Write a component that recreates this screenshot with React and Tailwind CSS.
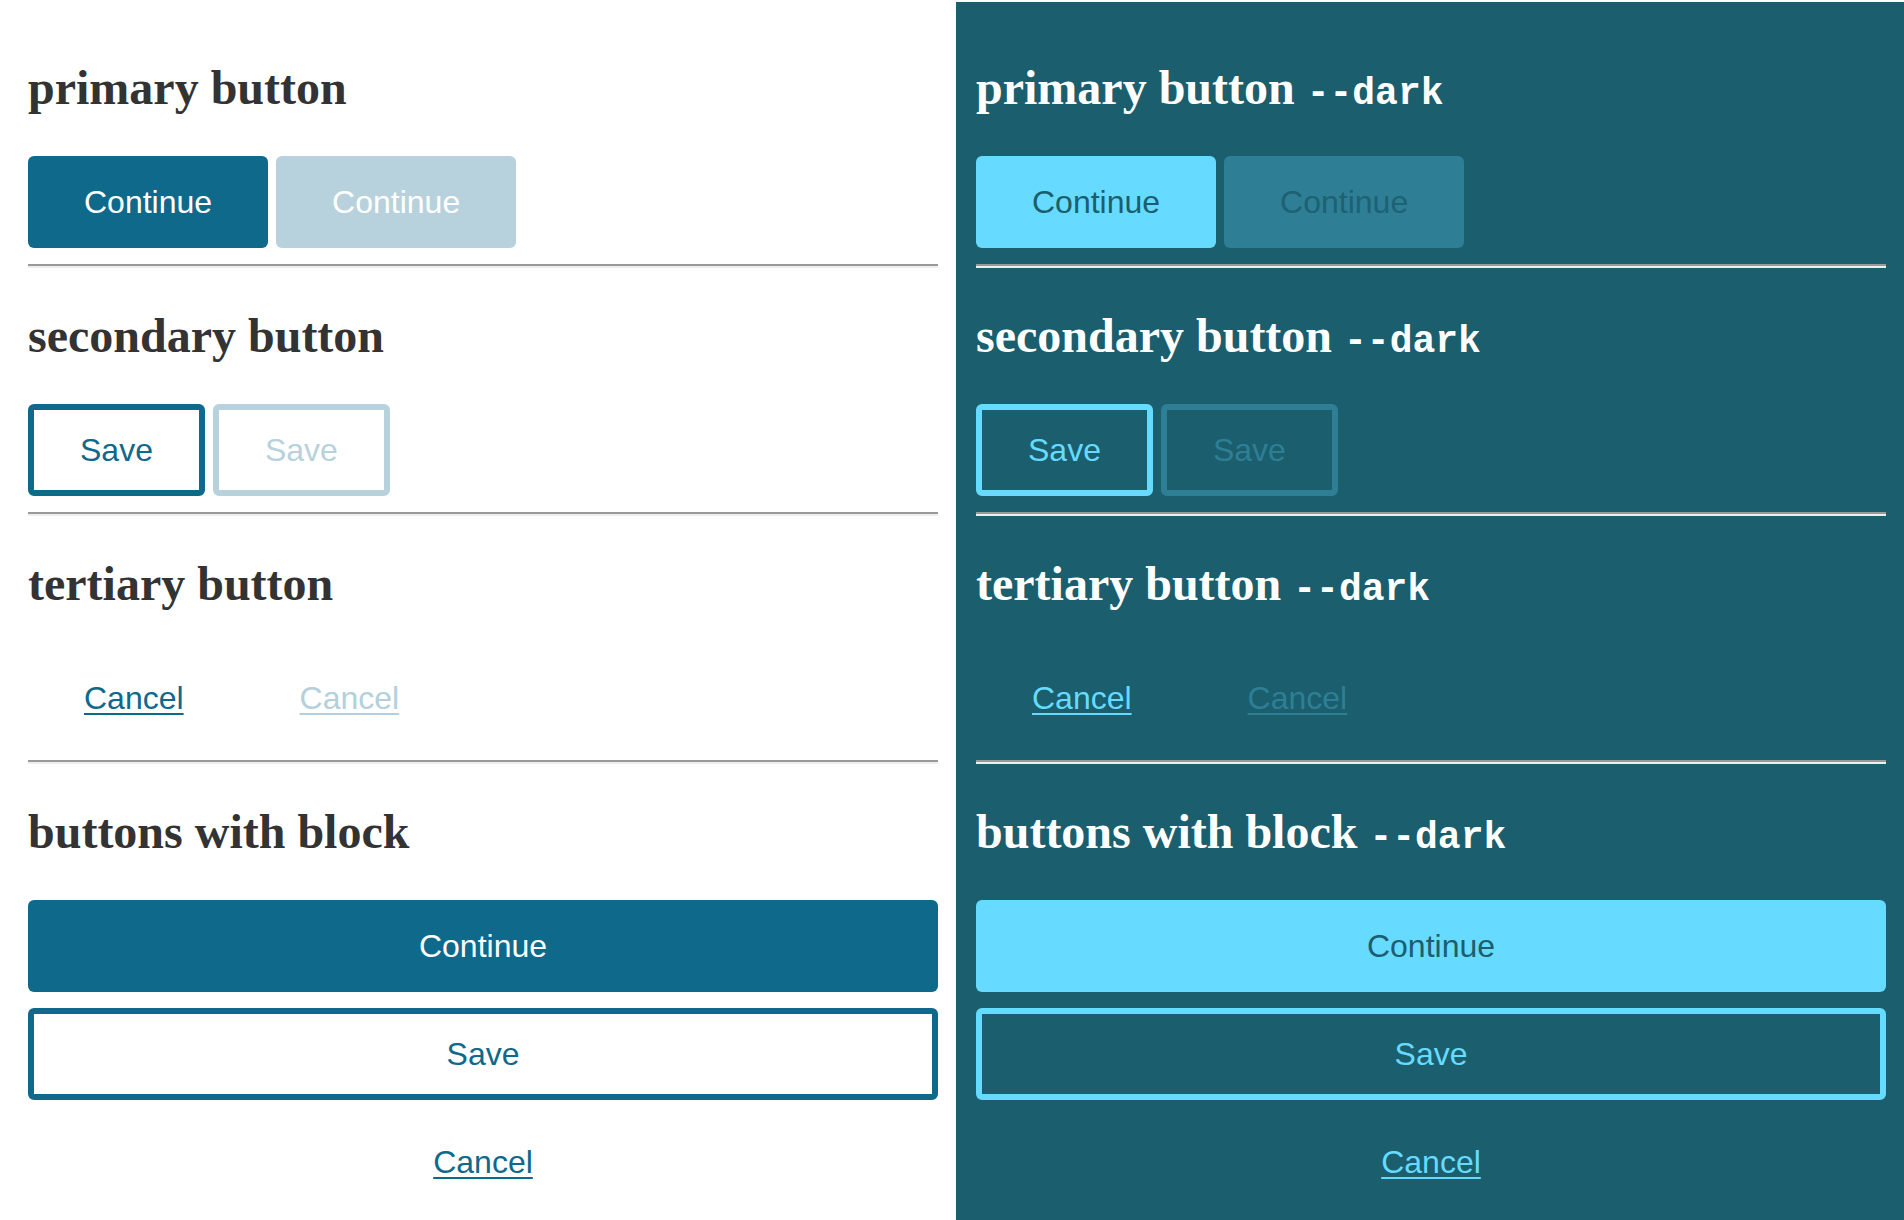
import React from "react";

const serif = "font-['Liberation_Serif','Times_New_Roman',serif]";
const sans = "font-['Liberation_Sans',Arial,sans-serif]";

const themes = {
  light: {
    heading: "text-[#333333]",
    primary: "bg-[#0f698b] text-white",
    primaryOff: "bg-[#b8d2dd] text-white",
    secondary: "border-[#0f698b] text-[#0f698b]",
    secondaryOff: "border-[#b8d2dd] text-[#b8d2dd]",
    tertiary: "text-[#0f698b]",
    tertiaryOff: "text-[#b3d0dc]",
  },
  dark: {
    heading: "text-white",
    primary: "bg-[#66dbff] text-[#1b5e6e]",
    primaryOff: "bg-[#2e7f95] text-[#1d6173]",
    secondary: "border-[#66dbff] text-[#66dbff]",
    secondaryOff: "border-[#2e7f95] text-[#2e7f95]",
    tertiary: "text-[#66dbff]",
    tertiaryOff: "text-[#2e7f95]",
  },
};

function Heading({ children, dark, theme }) {
  return (
    <h2 className={`${serif} ${theme.heading} mt-[44px] h-[48px] text-[48px] leading-[48px] font-bold whitespace-nowrap`}>
      {children}
      {dark && (
        <>
          {" "}
          <code className="font-['Liberation_Mono','Courier_New',monospace] text-[38px] leading-none font-bold">--dark</code>
        </>
      )}
    </h2>
  );
}

function Divider() {
  return <div className="mt-[16px] h-[4px] border-t-2 border-b-2 border-t-[#9a9a9a] border-b-[#eeeeee]" />;
}

function PrimaryButton({ theme, disabled, block }) {
  return (
    <button
      className={`${sans} ${disabled ? theme.primaryOff : theme.primary} ${block ? "w-full" : ""} h-[92px] px-[56px] rounded-[6px] text-[32px] flex items-center justify-center`}
    >
      Continue
    </button>
  );
}

function SecondaryButton({ theme, disabled, block }) {
  return (
    <button
      className={`${sans} ${disabled ? theme.secondaryOff : theme.secondary} ${block ? "w-full" : ""} h-[92px] px-[46px] border-[6px] rounded-[6px] text-[32px] flex items-center justify-center`}
    >
      Save
    </button>
  );
}

function TertiaryButton({ theme, disabled, block }) {
  return (
    <button
      className={`${sans} ${disabled ? theme.tertiaryOff : theme.tertiary} ${block ? "w-full" : ""} h-[92px] px-[56px] text-[32px] underline decoration-2 underline-offset-[4px] flex items-center justify-center`}
    >
      Cancel
    </button>
  );
}

function Column({ dark }) {
  const theme = dark ? themes.dark : themes.light;
  return (
    <div className="flex flex-col">
      <Heading dark={dark} theme={theme}>primary button</Heading>
      <div className="mt-[44px] flex gap-2">
        <PrimaryButton theme={theme} />
        <PrimaryButton theme={theme} disabled />
      </div>
      <Divider />

      <Heading dark={dark} theme={theme}>secondary button</Heading>
      <div className="mt-[44px] flex gap-2">
        <SecondaryButton theme={theme} />
        <SecondaryButton theme={theme} disabled />
      </div>
      <Divider />

      <Heading dark={dark} theme={theme}>tertiary button</Heading>
      <div className="mt-[44px] flex gap-1">
        <TertiaryButton theme={theme} />
        <TertiaryButton theme={theme} disabled />
      </div>
      <Divider />

      <Heading dark={dark} theme={theme}>buttons with block</Heading>
      <div className="mt-[44px] flex flex-col gap-4">
        <PrimaryButton theme={theme} block />
        <SecondaryButton theme={theme} block />
        <TertiaryButton theme={theme} block />
      </div>
    </div>
  );
}

export default function App() {
  return (
    <div className="flex min-h-screen bg-white">
      {/* light variant */}
      <div className="w-[956px] shrink-0 pl-[28px] pr-[18px] pt-[20px]">
        <Column />
      </div>

      {/* dark variant */}
      <div className="flex-1 mt-[2px] bg-[#1b5e6e] pl-[20px] pr-[18px] pt-[18px]">
        <Column dark />
      </div>
    </div>
  );
}
